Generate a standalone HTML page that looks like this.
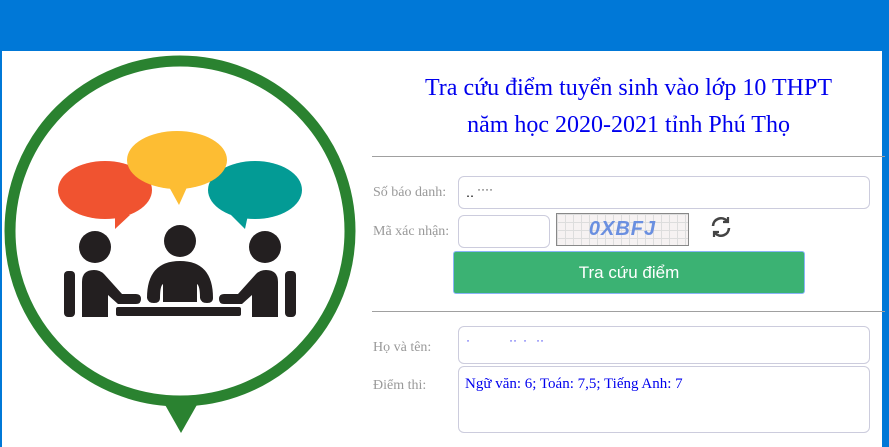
<!DOCTYPE html>
<html><head><meta charset="utf-8"><style>
body{margin:0;width:889px;height:447px;overflow:hidden;background:#0078d7;font-family:"Liberation Serif",serif;position:relative}
.panel{position:absolute;left:2px;top:51px;width:880px;height:396px;background:#fff}
.a{position:absolute}
.title{left:372px;width:513px;top:70px;text-align:center;color:#0000ee;font-size:24px;line-height:37px}
.hr{height:1px;background:#a0a0a0;left:372px;width:513px}
.lbl{color:#999;font-size:14px;left:373px}
.inp{border:1px solid #ccd;border-radius:6px;background:#fff;box-sizing:border-box}
</style></head><body>
<div class="panel"></div>
<svg class="a" style="left:0;top:40px" width="362" height="400" viewBox="0 40 362 400">
<circle cx="180" cy="231" r="170" fill="#fff" stroke="#2a8230" stroke-width="11"/>
<polygon points="164,403 198,403 181,433" fill="#2a8230"/>
<ellipse cx="105" cy="190" rx="47" ry="29" fill="#f05330"/>
<polygon points="115,212 130,215 115,229" fill="#f05330"/>
<ellipse cx="255" cy="190" rx="47" ry="29" fill="#039b95"/>
<polygon points="230,214 248,215 245,229" fill="#039b95"/>
<ellipse cx="177" cy="160" rx="50" ry="29" fill="#fdbd33"/>
<polygon points="168,185 188,185 179,205" fill="#fdbd33"/>
<g fill="#231f20">
<circle cx="95" cy="247" r="16"/><circle cx="180" cy="241" r="16"/><circle cx="265" cy="247" r="16"/>
<rect x="64" y="271" width="11" height="46" rx="4"/><rect x="285" y="271" width="11" height="46" rx="4"/>
<path d="M82 317V282q0-12 12-12q6 0 10 4l18 20h14q5 0 5 5t-5 5h-18l-10-9v22z"/>
<path d="M278 317V282q0-12-12-12q-6 0-10 4l-18 20h-14q-5 0-5 5t5 5h18l10-9v22z"/>
<path d="M147 298q0-37 33-37t33 37q0 5-6 5t-7-5q0-12-3-14v18h-34v-18q-3 2-3 14q0 5-6 5t-7-5z"/>
<rect x="116" y="307" width="125" height="9" rx="2"/>
</g></svg>
<div class="a title">Tra cứu điểm tuyển sinh vào lớp 10 THPT<br>năm học 2020-2021 tỉnh Phú Thọ</div>
<div class="a hr" style="top:156px"></div>
<div class="a lbl" style="top:185px">Số báo danh:</div>
<div class="a inp" style="left:458px;top:176px;width:412px;height:33px"></div>
<div class="a" style="left:466px;top:186px;font-size:12px">&#8228;&#8228; ˙˙˙˙</div>
<div class="a lbl" style="top:224px">Mã xác nhận:</div>
<div class="a inp" style="left:458px;top:215px;width:92px;height:33px"></div>
<div class="a" style="left:556px;top:213px;width:133px;height:33px;border:1px solid #888;box-sizing:border-box;background:#f6f2f2;background-image:linear-gradient(#ddd 1px,transparent 1px),linear-gradient(90deg,#ddd 1px,transparent 1px);background-size:8px 8px;color:#6a8fe0;font:bold 20px 'Liberation Sans',sans-serif;text-align:center;line-height:31px;letter-spacing:1px;font-style:italic">0XBFJ</div>
<svg class="a" style="left:709px;top:215px" width="24" height="24" viewBox="0 0 24 24" fill="none" stroke="#444" stroke-width="2.6"><path d="M4 11a8 8 0 0 1 14-5"/><path d="M20 13a8 8 0 0 1-14 5"/><path d="M19 2v5h-5M5 22v-5h5" stroke-width="2.2"/></svg>
<div class="a" style="left:453px;top:251px;width:352px;height:43px;background:#3bb273;border:1px solid #8ab4f8;box-sizing:border-box;border-radius:3px;color:#fff;font:17px 'Liberation Sans',sans-serif;text-align:center;line-height:41px">Tra cứu điểm</div>
<div class="a hr" style="top:311px"></div>
<div class="a lbl" style="top:340px">Họ và tên:</div>
<div class="a inp" style="left:458px;top:326px;width:412px;height:38px"></div>
<div class="a" style="left:466px;top:337px;color:#00e;font-size:12px">˙ &nbsp; &nbsp; &nbsp; &nbsp; &nbsp; &nbsp; ˙˙ &nbsp;˙ &nbsp; ˙˙</div>
<div class="a lbl" style="top:378px">Điểm thi:</div>
<div class="a inp" style="left:458px;top:366px;width:412px;height:67px"></div>
<div class="a" style="left:465px;top:376px;color:#0000ee;font-size:15px">Ngữ văn: 6; Toán: 7,5; Tiếng Anh: 7</div>
</body></html>
